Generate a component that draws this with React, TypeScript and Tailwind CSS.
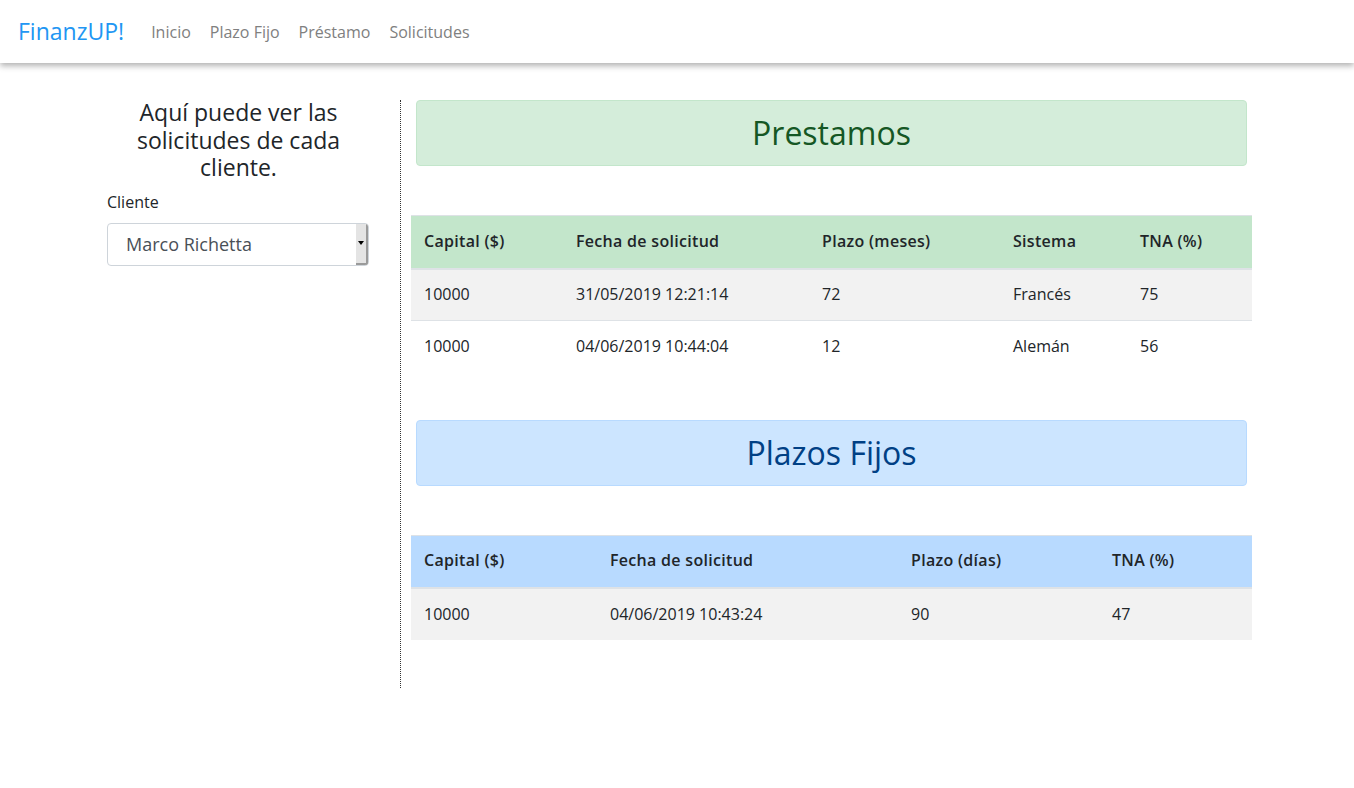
const prestamos = [
  { capital: "10000", fecha: "31/05/2019 12:21:14", plazo: "72", sistema: "Francés", tna: "75" },
  { capital: "10000", fecha: "04/06/2019 10:44:04", plazo: "12", sistema: "Alemán", tna: "56" },
];

const plazos = [{ capital: "10000", fecha: "04/06/2019 10:43:24", plazo: "90", tna: "47" }];

function Navbar() {
  return (
    <nav className="relative z-10 flex h-[63px] items-center px-[18px] bg-white shadow-[0_3px_6px_rgba(0,0,0,0.3)]">
      <a className="text-[23px] text-[#2196f3] mr-[27px] leading-none">FinanzUP!</a>
      <ul className="flex gap-[19px] text-[16px] text-[#808080]">
        <li>Inicio</li>
        <li>Plazo Fijo</li>
        <li>Préstamo</li>
        <li>Solicitudes</li>
      </ul>
    </nav>
  );
}

export default function App() {
  return (
    <div className="min-h-screen bg-white text-[#212529] font-['Open_Sans',sans-serif]">
      <Navbar />
      <main className="flex pt-[37px] pl-[107px]">
        <aside className="w-[263px] shrink-0">
          <h4 className="text-center text-[23px] leading-[27.5px] px-[10px] -mt-[1px]">
            Aquí puede ver las solicitudes de cada cliente.
          </h4>
          <label className="block mt-[8px] text-[16px] leading-[24px]">Cliente</label>
          <div className="mt-[9px] flex h-[43px] w-[262px] items-stretch rounded-[4px] border border-[#ced4da] overflow-hidden">
            <div className="flex-1 flex items-center pl-[18px] text-[18px] text-[#495057]">Marco Richetta</div>
            <div className="w-[12px] flex items-center justify-center bg-[#e4e4e4] border-r-[2px] border-b-[2px] border-[#9a9a9a]">
              <span className="block h-0 w-0 border-x-[3px] border-t-[4px] border-x-transparent border-t-black" />
            </div>
          </div>
        </aside>

        <div className="ml-[30px] w-0 border-l border-dotted border-[#333] h-[588px]" />

        <section className="w-[841px] ml-[10px]">
          <div className="mx-[5px] h-[66px] flex items-center justify-center rounded-[4px] border border-[#c3e6cb] bg-[#d4edda] text-[#155724] text-[32px]">
            Prestamos
          </div>
          <table className="mt-[49px] w-full text-left text-[16px] border-collapse">
            <thead>
              <tr className="bg-[#c3e6cb] h-[53px] border-t border-b-2 border-[#dee2e6]">
                <th className="w-[152px] pl-[13px] pb-[2px] font-semibold tracking-[0.3px]">Capital ($)</th>
                <th className="w-[246px] pl-[13px] pb-[2px] font-semibold tracking-[0.3px]">Fecha de solicitud</th>
                <th className="w-[191px] pl-[13px] pb-[2px] font-semibold tracking-[0.3px]">Plazo (meses)</th>
                <th className="w-[127px] pl-[13px] pb-[2px] font-semibold tracking-[0.3px]">Sistema</th>
                <th className="pl-[13px] pb-[2px] font-semibold tracking-[0.3px]">TNA (%)</th>
              </tr>
            </thead>
            <tbody>
              {prestamos.map((p, i) => (
                <tr key={i} className={`h-[52px] ${i % 2 === 0 ? "bg-[#f2f2f2]" : "bg-white border-t border-[#dee2e6]"}`}>
                  <td className="pl-[13px] pb-[2px]">{p.capital}</td>
                  <td className="pl-[13px] pb-[2px]">{p.fecha}</td>
                  <td className="pl-[13px] pb-[2px]">{p.plazo}</td>
                  <td className="pl-[13px] pb-[2px]">{p.sistema}</td>
                  <td className="pl-[13px] pb-[2px]">{p.tna}</td>
                </tr>
              ))}
            </tbody>
          </table>

          <div className="mt-[47px] mx-[5px] h-[66px] flex items-center justify-center rounded-[4px] border border-[#b8daff] bg-[#cce5ff] text-[#004085] text-[32px]">
            Plazos Fijos
          </div>
          <table className="mt-[49px] w-full text-left text-[16px] border-collapse">
            <thead>
              <tr className="bg-[#b8daff] h-[53px] border-t border-b-2 border-[#dee2e6]">
                <th className="w-[186px] pl-[13px] pb-[2px] font-semibold tracking-[0.3px]">Capital ($)</th>
                <th className="w-[301px] pl-[13px] pb-[2px] font-semibold tracking-[0.3px]">Fecha de solicitud</th>
                <th className="w-[201px] pl-[13px] pb-[2px] font-semibold tracking-[0.3px]">Plazo (días)</th>
                <th className="pl-[13px] pb-[2px] font-semibold tracking-[0.3px]">TNA (%)</th>
              </tr>
            </thead>
            <tbody>
              {plazos.map((p, i) => (
                <tr key={i} className="h-[52px] bg-[#f2f2f2]">
                  <td className="pl-[13px] pb-[2px]">{p.capital}</td>
                  <td className="pl-[13px] pb-[2px]">{p.fecha}</td>
                  <td className="pl-[13px] pb-[2px]">{p.plazo}</td>
                  <td className="pl-[13px] pb-[2px]">{p.tna}</td>
                </tr>
              ))}
            </tbody>
          </table>
        </section>
      </main>
    </div>
  );
}
